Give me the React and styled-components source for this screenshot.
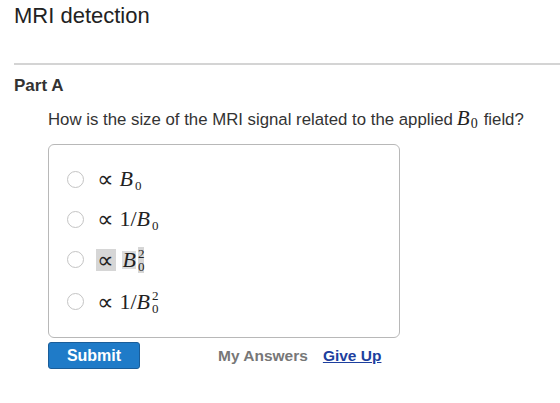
import React from 'react';
import styled, { createGlobalStyle } from 'styled-components';

const GlobalStyle = createGlobalStyle`
    body {
        margin: 0;
        background: #fff;
        font-family: "Liberation Sans", Arial, sans-serif;
        color: #333;
    }
`

const Page = styled.div`
    width: 560px;
    height: 403px;
    overflow: hidden;
`

const Title = styled.h1`
    margin: 0;
    padding: 1px 14px 0;
    height: 62px;
    font-size: 22px;
    line-height: 30px;
    font-weight: normal;
    color: #222;
`

const Section = styled.section`
    margin-left: 14px;
    border-top: 2px solid #d4d4d4;
`

const PartTitle = styled.h2`
    margin: 0;
    padding-top: 11px;
    font-size: 17px;
    line-height: 20px;
    font-weight: bold;
    color: #333;
`

const Body = styled.div`
    padding-left: 34px;
`

const Question = styled.p`
    margin: 12px 0 0;
    font-size: 16.8px;
    line-height: 20px;
    color: #333;
    white-space: nowrap;
`

const Choices = styled.div`
    margin-top: 10px;
    width: 352px;
    height: 194px;
    box-sizing: border-box;
    border: 1px solid #b8b8b8;
    border-radius: 6px;
    display: flex;
    flex-direction: column;
    padding-top: 14px;
`

const Choice = styled.label`
    display: flex;
    align-items: center;
    height: ${p => p.h || 40}px;
    padding-left: 18px;
    gap: 13px;
`

const Radio = styled.span`
    width: 15px;
    height: 15px;
    border-radius: 50%;
    border: 1px solid #c4c4c4;
    background: #fff;
    flex: none;
`

const Math = styled.span`
    font-family: "Liberation Serif", "DejaVu Serif", serif;
    font-size: 22px;
    color: #222;
    display: inline-flex;
    align-items: center;
    white-space: nowrap;
`

const Op = styled.span`
    font-family: "DejaVu Sans", sans-serif;
    font-size: 23px;
    line-height: 22px;
    margin-right: 6px;
    background: ${p => (p.marked ? '#d6d6d6' : 'transparent')};
    padding: ${p => (p.marked ? '0 3px 0 1px' : '0')};
    margin-left: ${p => (p.marked ? '-1px' : '0')};
`

const Var = styled.i`
    font-style: italic;
    line-height: 18px;
    background: ${p => (p.marked ? '#dcdcdc' : 'transparent')};
`

const Num = styled.span``

const Scripts = styled.span`
    display: inline-flex;
    flex-direction: column;
    font-size: 13px;
    line-height: 13px;
    margin-left: 2px;
    background: ${p => (p.marked ? '#d6d6d6' : 'transparent')};
    padding-top: ${p => (p.sup ? 0 : 12)}px;
`

const Inline = styled.span`
    font-family: "Liberation Serif", "DejaVu Serif", serif;
    font-size: 21px;
    margin: 0 6px 0 4px;
    color: #222;
    i { font-style: italic; }
    sub { font-size: 14px; vertical-align: -3px; margin-left: 1px; font-style: normal; }
`

const Actions = styled.div`
    display: flex;
    align-items: center;
    margin-top: 4px;
`

const SubmitButton = styled.button`
    width: 92px;
    height: 27px;
    background: #1f7bc8;
    border: 1px solid #1a5d99;
    border-radius: 3px;
    color: #fff;
    font-family: "Liberation Sans", Arial, sans-serif;
    font-weight: bold;
    font-size: 16px;
    padding: 0;
    margin-right: 78px;
`

const TextLink = styled.a`
    font-size: 15.5px;
    font-weight: bold;
    color: ${p => (p.muted ? '#777' : '#1d3f9e')};
    text-decoration: ${p => (p.muted ? 'none' : 'underline')};
    margin-right: 15px;
`

const B0 = ({ sup, marked }) => (
    <>
        <Var marked={marked}>B</Var>
        <Scripts sup={sup} marked={marked}>
            {sup && <Num>2</Num>}
            <Num>0</Num>
        </Scripts>
    </>
)

const App = () => (
    <Page>
        <GlobalStyle />
        <Title>MRI detection</Title>
        <Section>
            <PartTitle>Part A</PartTitle>
            <Body>
                <Question>
                    How is the size of the MRI signal related to the applied
                    <Inline><i>B</i><sub>0</sub></Inline>field?
                </Question>
                <Choices>
                    <Choice>
                        <Radio />
                        <Math><Op>∝</Op><B0 /></Math>
                    </Choice>
                    <Choice>
                        <Radio />
                        <Math><Op>∝</Op><Num>1/</Num><B0 /></Math>
                    </Choice>
                    <Choice h={41}>
                        <Radio />
                        <Math><Op marked>∝</Op><B0 sup marked /></Math>
                    </Choice>
                    <Choice h={43}>
                        <Radio />
                        <Math><Op>∝</Op><Num>1/</Num><B0 sup /></Math>
                    </Choice>
                </Choices>
                <Actions>
                    <SubmitButton>Submit</SubmitButton>
                    <TextLink muted>My Answers</TextLink>
                    <TextLink href="#">Give Up</TextLink>
                </Actions>
            </Body>
        </Section>
    </Page>
)

export default App;
